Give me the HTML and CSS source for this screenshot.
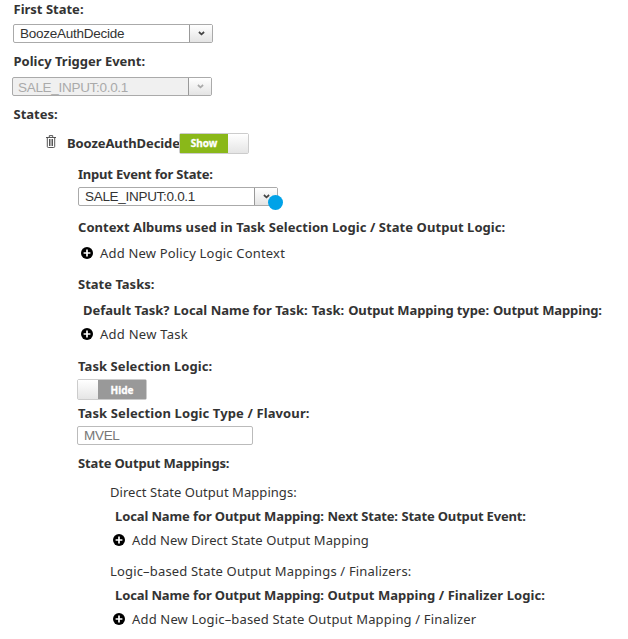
FILE: index.html
```html
<!DOCTYPE html>
<html lang="en">
<head>
<meta charset="utf-8">
<title>Policy States</title>
<link rel="stylesheet" href="styles.css">
</head>
<body>
<svg class="defs" aria-hidden="true">
  <symbol id="plus" viewBox="0 0 12 12"><circle cx="6" cy="6" r="6" fill="#000"/><path d="M6 2.6v6.8M2.6 6h6.8" stroke="#fff" stroke-width="1.7"/></symbol>
  <symbol id="chevron" viewBox="0 0 7 5"><path d="M.9 1l2.6 2.3L6.1 1" fill="none" stroke="currentColor" stroke-width="1.7"/></symbol>
</svg>
<main class="form">
  <div class="label first-label">First State:</div>
  <div class="select first"><span class="value">BoozeAuthDecide</span><span class="arrow"><svg><use href="#chevron"/></svg></span></div>
  <div class="label trigger-label">Policy Trigger Event:</div>
  <div class="select disabled"><span class="value">SALE_INPUT:0.0.1</span><span class="arrow"><svg><use href="#chevron"/></svg></span></div>
  <div class="label states-label">States:</div>
  <div class="state-head">
    <svg class="trash" viewBox="0 0 10 13" fill="none" stroke="#444"><path d="M0 2.5h10M3.3 2V.6h3.4V2M1.3 2.5v9q0 1 1 1h5.4q1 0 1-1v-9M3.5 4v7M5 4v7M6.5 4v7" stroke-width=".9"/></svg>
    <span class="state-name">BoozeAuthDecide</span>
    <span class="toggle on"><span class="toggle-text">Show</span><span class="knob"></span></span>
  </div>
  <section class="state">
    <div class="label input-label">Input Event for State:</div>
    <div class="select input-event"><span class="value">SALE_INPUT:0.0.1</span><span class="arrow"><svg><use href="#chevron"/></svg></span><span class="marker"></span></div>
    <div class="label albums">Context Albums used in Task Selection Logic / State Output Logic:</div>
    <div class="add add-context"><svg><use href="#plus"/></svg><span>Add New Policy Logic Context</span></div>
    <div class="label tasks">State Tasks:</div>
    <div class="columns task-columns"><span>Default Task?</span><span>Local Name for Task:</span><span>Task:</span><span class="snug">Output Mapping type:</span><span class="snug">Output Mapping:</span></div>
    <div class="add add-task"><svg><use href="#plus"/></svg><span>Add New Task</span></div>
    <div class="label logic">Task Selection Logic:</div>
    <div class="toggle off"><span class="knob"></span><span class="toggle-text">Hide</span></div>
    <div class="label flavour">Task Selection Logic Type / Flavour:</div>
    <div class="field">MVEL</div>
    <div class="label mappings">State Output Mappings:</div>
    <div class="outputs">
      <div class="subtitle direct">Direct State Output Mappings:</div>
      <div class="columns"><span class="snug">Local Name for Output Mapping:</span><span class="tight">Next State:</span><span class="tight">State Output Event:</span></div>
      <div class="add add-direct"><svg><use href="#plus"/></svg><span>Add New Direct State Output Mapping</span></div>
      <div class="subtitle finalizers">Logic–based State Output Mappings / Finalizers:</div>
      <div class="columns"><span class="snug">Local Name for Output Mapping:</span><span class="finalizer-column">Output Mapping / Finalizer Logic:</span></div>
      <div class="add"><svg><use href="#plus"/></svg><span>Add New Logic–based State Output Mapping / Finalizer</span></div>
    </div>
  </section>
</main>
</body>
</html>
```
FILE: styles.css
```css
* { box-sizing: border-box; }
body { margin: 0; background: #fff; color: #333; font: 13px/20px "Noto Sans", "Open Sans", sans-serif; white-space: nowrap; }
.defs { position: absolute; width: 0; height: 0; }
.form { padding-left: 13px; }
.label, .columns, .state-name { font-weight: 700; height: 20px; }
.first-label { height: 19px; line-height: 18px; }
.select { position: relative; display: flex; width: 200px; height: 19px; border: 1px solid #aaa; border-radius: 2px; background: #fff; font: 13.5px/18px "Liberation Sans", Arial, sans-serif; letter-spacing: -.3px; }
.value { flex: 1; padding-left: 6px; overflow: hidden; }
.arrow { width: 23px; display: flex; align-items: center; justify-content: center; border-left: 1px solid #999; background: linear-gradient(#fff, #e4e4e4); color: #444; }
.arrow svg { width: 7px; height: 5px; }
.first { margin-top: 5px; letter-spacing: -.25px; }
.trigger-label { margin-top: 8px; }
.disabled { margin: 6px 0 0 -1px; background: #f0f0f0; color: #aaa; line-height: 20px; }
.disabled .value { padding-left: 5px; }
.disabled .arrow { color: #aaa; }
.states-label { margin-top: 8px; }
.first-label, .trigger-label, .states-label { padding-left: .5px; }
.state-head { display: flex; align-items: center; height: 22px; margin: 8px 0 0 33px; }
.trash { width: 10px; height: 13px; margin: -3px 11px 0 0; }
.state-name { width: 112px; letter-spacing: -.1px; }
.toggle { display: flex; width: 70px; height: 21px; border: 1px solid #ccc; border-radius: 2px; color: #fff; font-size: 10px; font-weight: 700; line-height: 18px; text-align: center; -webkit-text-stroke: .3px #fff; }
.toggle-text { flex: 1; }
.on .toggle-text { background: #8ab819; }
.off .toggle-text { background: #999; line-height: 20px; }
.knob { width: 20px; background: linear-gradient(#fff, #e5e5e5); }
.state { margin: 10px 0 0 65px; }
.input-label { letter-spacing: -.2px; }
.input-event { margin-top: 3px; }
.marker { position: absolute; left: 189px; top: 7px; width: 15px; height: 15px; border-radius: 50%; background: #00a2e8; }
.albums { margin-top: 11px; letter-spacing: .06px; }
.add { display: flex; align-items: center; height: 20px; margin: 4px 0 0 3px; letter-spacing: .165px; }
.add svg { width: 12px; height: 12px; margin-right: 7px; }
.add-context { margin-top: 6px; letter-spacing: .18px; }
.add-task { letter-spacing: .25px; }
.add-direct { letter-spacing: .09px; }
.tasks { margin-top: 11px; }
.columns { display: flex; gap: 3.6px; margin: 4px 0 0 5px; }
.task-columns { margin-top: 6px; gap: 4px; }
.snug { letter-spacing: -.12px; }
.tight { letter-spacing: -.17px; }
.finalizer-column { letter-spacing: .06px; }
.logic { margin-top: 12px; letter-spacing: .07px; }
.off { margin: 3px 0 0 -1px; }
.flavour { margin-top: 3px; letter-spacing: .11px; }
.field { width: 176px; height: 19px; margin: 3px 0 0 -1px; padding-left: 6px; border: 1px solid #bbb; border-radius: 2px; color: #777; font: 13.5px/17px "Liberation Sans", Arial, sans-serif; letter-spacing: -.3px; }
.mappings { margin-top: 8px; letter-spacing: -.15px; }
.outputs { margin-left: 32px; }
.subtitle { height: 20px; }
.direct { margin-top: 9px; letter-spacing: .05px; }
.finalizers { margin-top: 11px; letter-spacing: .17px; }
```
